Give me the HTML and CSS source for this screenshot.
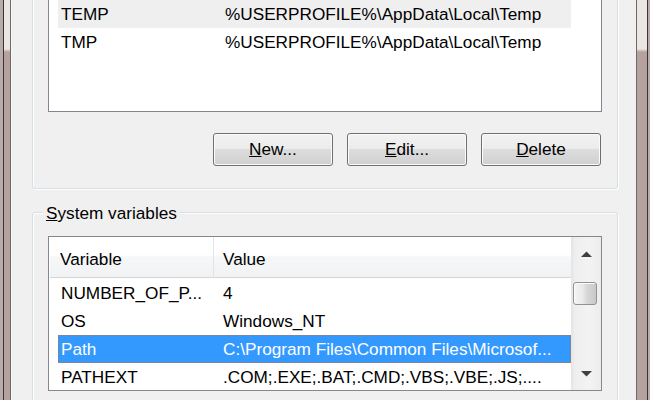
FILE: index.html
```html
<!DOCTYPE html>
<html>
<head>
<meta charset="utf-8">
<link rel="stylesheet" href="styles.css">
</head>
<body>
<div class="window">
  <div class="frame frame-left"></div>
  <div class="content">
    <div class="group group-user">
      <div class="listbox list-user">
        <div class="rows">
          <div class="row row-hot"><span class="cell">TEMP</span><span class="cell">%USERPROFILE%\AppData\Local\Temp</span></div>
          <div class="row"><span class="cell">TMP</span><span class="cell">%USERPROFILE%\AppData\Local\Temp</span></div>
        </div>
      </div>
      <div class="buttons">
        <button class="btn"><u>N</u>ew...</button>
        <button class="btn"><u>E</u>dit...</button>
        <button class="btn"><u>D</u>elete</button>
      </div>
    </div>
    <div class="group group-system">
      <div class="legend"><u>S</u>ystem variables</div>
      <div class="listbox list-system">
        <div class="list-main">
          <div class="header">
            <div class="hcell hcell-var">Variable</div>
            <div class="hcell">Value</div>
          </div>
          <div class="row row-first"><span class="cell">NUMBER_OF_P...</span><span class="cell">4</span></div>
          <div class="row"><span class="cell">OS</span><span class="cell">Windows_NT</span></div>
          <div class="row row-sel"><span class="cell">Path</span><span class="cell">C:\Program Files\Common Files\Microsof...</span></div>
          <div class="row"><span class="cell">PATHEXT</span><span class="cell">.COM;.EXE;.BAT;.CMD;.VBS;.VBE;.JS;....</span></div>
        </div>
        <div class="scrollbar">
          <div class="sb-btn">
            <svg width="11" height="6" viewBox="0 0 11 6"><polygon points="0,6 5.5,0.5 11,6" fill="#404040"/></svg>
          </div>
          <div class="sb-track"><div class="sb-thumb"></div></div>
          <div class="sb-btn">
            <svg width="11" height="6" viewBox="0 0 11 6"><polygon points="0,0 11,0 5.5,5.5" fill="#404040"/></svg>
          </div>
        </div>
      </div>
    </div>
  </div>
  <div class="frame frame-right"></div>
</div>
</body>
</html>
```
FILE: styles.css
```css
html, body {
  margin: 0;
  padding: 0;
}
body {
  width: 650px;
  height: 400px;
  overflow: hidden;
  background: #f0f0f0;
  font-family: "Liberation Sans", Arial, sans-serif;
  font-size: 17.2px;
  color: #000;
}
.window {
  display: flex;
  height: 400px;
  overflow: hidden;
}
.frame-left {
  flex: 0 0 12px;
  background:
    linear-gradient(to right, #b9adab 0 3px, #3b3333 3px 4px, transparent 4px 10px, #6e6a6a 10px 11px, #f7f7f7 11px 12px),
    linear-gradient(#ebe5e4 0 49px, #b5a19d 52px);
}
.frame-right {
  flex: 0 0 14px;
  background:
    linear-gradient(to right, #6e6a6a 0 1px, transparent 1px 11px, #3b3333 11px 12px, #b9adab 12px),
    linear-gradient(#ebe5e4 0 49px, #b5a19d 52px);
}
.content {
  flex: 1;
  min-width: 0;
  height: 400px;
  overflow: hidden;
  padding: 0 18px 0 20px;
  background: #f0f0f0;
}
.group {
  border: 1px solid #d5dfe5;
  border-radius: 3px;
  box-shadow: inset 1px 1px 0 #fff, 1px 1px 0 #fff;
  padding: 0 15px 22px 15px;
}
.group-user {
  margin-top: -41px;
}
.group-system {
  margin-top: 23px;
  padding-bottom: 20px;
}
.listbox {
  border: 1px solid #828790;
  background: #fff;
  box-sizing: border-box;
}
.list-user {
  margin-top: 10px;
  height: 142px;
  padding-top: 29px;
}
.list-user .rows {
  width: 513px;
  margin-left: 9px;
}
.list-user .row {
  grid-template-columns: 164px 1fr;
}
.row {
  display: grid;
  grid-template-columns: 162px 1fr;
  height: 28px;
  line-height: 28px;
  white-space: nowrap;
  box-sizing: border-box;
}
.cell {
  padding-left: 3px;
  overflow: hidden;
}
.row-hot {
  background: #efefef;
}
.row-sel {
  background: #3399ff;
  color: #fff;
  outline: 1px dotted #c0733a;
  outline-offset: -1px;
}
.buttons {
  display: flex;
  justify-content: flex-end;
  gap: 14px;
  margin-top: 21px;
  padding-right: 1px;
}
.btn {
  width: 120px;
  height: 33px;
  padding: 0;
  font: inherit;
  color: #000;
  line-height: 31px;
  border: 1px solid #707070;
  border-radius: 3px;
  background: linear-gradient(#f2f2f2 0, #ebebeb 50%, #dddddd 50%, #cfcfcf 100%);
  box-shadow: inset 0 0 0 1px #fbfbfb;
}
.legend {
  width: fit-content;
  margin: -11px 0 0 -5px;
  padding: 0 3px;
  line-height: 22px;
  background: #f0f0f0;
}
.list-system {
  margin-top: 12px;
  height: 155px;
  display: flex;
}
.list-main {
  flex: 1;
  min-width: 0;
  padding-left: 1px;
  overflow: hidden;
}
.list-system .row {
  margin-left: 8px;
}
.list-system .cell {
  padding-top: 1px;
  line-height: 27px;
}
.row-first {
  margin-top: 1px;
}
.header {
  display: grid;
  grid-template-columns: 164px 1fr;
  height: 41px;
  box-sizing: border-box;
  border-bottom: 1px solid #d5d5d5;
  background: linear-gradient(#ffffff 0, #ffffff 45%, #f6f7f8 50%, #f1f2f4 100%);
}
.hcell {
  padding: 5px 0 0 9px;
  line-height: 35px;
}
.hcell-var {
  padding-left: 10px;
  border-right: 1px solid #e1e4e8;
}
.scrollbar {
  flex: 0 0 30px;
  display: flex;
  flex-direction: column;
  background: linear-gradient(to right, #e4e4e4, #eeeeee 12%, #f3f3f3 60%, #ececec);
}
.sb-btn {
  height: 33px;
  display: flex;
  align-items: center;
  justify-content: center;
}
.sb-btn svg {
  display: block;
}
.sb-track {
  flex: 1;
}
.sb-thumb {
  margin: 12px 0 0 2px;
  width: 24px;
  height: 23px;
  box-sizing: border-box;
  border: 1px solid #929292;
  border-radius: 3px;
  background: linear-gradient(to right, #f4f4f4 0, #e9e9e9 40%, #d6d6d6 60%, #c9c9c9 100%);
  box-shadow: inset 1px 1px 0 #fcfcfc;
}
```
